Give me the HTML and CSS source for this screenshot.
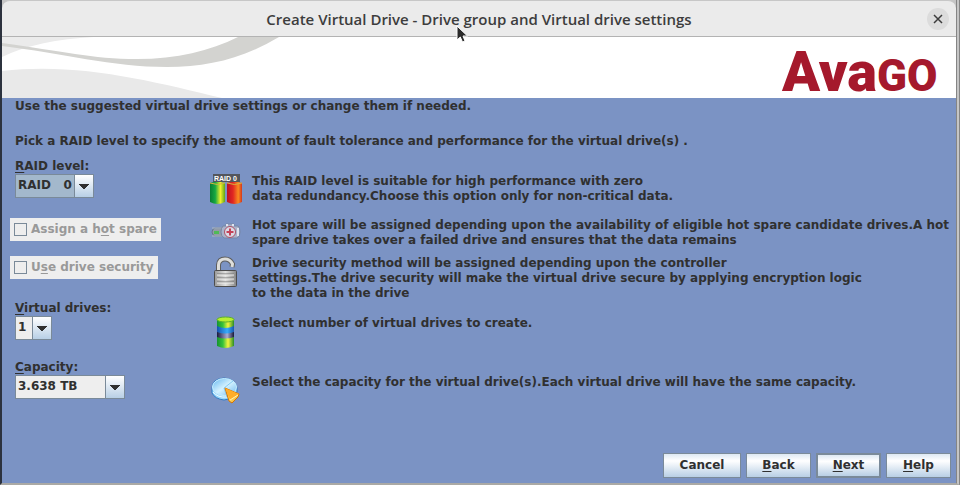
FILE: index.html
```
<!DOCTYPE html>
<html lang="en">
<head>
<meta charset="utf-8">
<title>Create Virtual Drive</title>
<link rel="stylesheet" href="styles.css">
</head>
<body>
<div class="window">
  <header class="titlebar">
    <h1>Create Virtual Drive - Drive group and Virtual drive settings</h1>
    <button class="close" type="button" aria-label="Close"><svg width="10" height="10" viewBox="0 0 10 10"><path d="M1 1L9 9M9 1L1 9" stroke="#3c3c3c" stroke-width="1.5"/></svg></button>
  </header>
  <svg class="pointer" width="14" height="20" viewBox="0 0 14 20"><path d="M1 1V15L4.300 12L6.500 17L9 16L7 11H11.500Z" fill="#2b2b2b" stroke="#fff" stroke-width="1"/></svg>
  <div class="banner">
    <svg class="waves" width="300" height="61" viewBox="0 0 300 61">
      <path d="M0 0H92C55 2 25 8 0 20Z" fill="#ebebeb"/>
      <path d="M0 34C75 25 150 44 220 61H0Z" fill="#e9e9e9"/>
      <path d="M0 6C60 14 90 22 135 22C175 22 208 14 236 0H277C240 22 205 30 165 30C110 30 60 16 0 9Z" fill="#d3d3d0"/>
    </svg>
    <svg class="logo" width="158" height="61" viewBox="0 0 158 61" role="img" aria-label="Avago">
      <text x="0" y="54"><tspan class="big">A</tspan><tspan class="low">va</tspan><tspan class="cap">GO</tspan></text>
    </svg>
  </div>
  <main class="content">
    <p class="intro">Use the suggested virtual drive settings or change them if needed.</p>
    <p class="intro">Pick a RAID level to specify the amount of fault tolerance and performance for the virtual drive(s) .</p>
    <form class="settings">
      <div class="row tall">
        <div class="field"><label for="raid"><u>R</u>AID level:</label>
          <select id="raid" class="combo active"><option>RAID &nbsp; 0</option></select></div>
        <svg class="icon" width="34" height="32" viewBox="0 0 34 32">
          <defs>
            <linearGradient id="green"><stop offset="0" stop-color="#087d32"/><stop offset=".35" stop-color="#16a842"/><stop offset=".7" stop-color="#f0f02c"/><stop offset="1" stop-color="#61a516"/></linearGradient>
            <linearGradient id="red"><stop offset="0" stop-color="#bd1025"/><stop offset=".4" stop-color="#e12822"/><stop offset=".75" stop-color="#fa8a20"/><stop offset="1" stop-color="#d2381e"/></linearGradient>
          </defs>
          <path d="M0 9Q7.500 6 15 9V28Q7.500 32 0 28Z" fill="url(#green)"/>
          <path d="M17 9Q24.500 6 32 9V28Q24.500 32 17 28Z" fill="url(#red)"/>
          <path d="M0 9Q7.500 12 15 9M17 9Q24.500 12 32 9" fill="none" stroke="#d7b43d"/>
          <rect x="3" width="27" height="8" fill="#53565d"/>
          <text class="tag" x="4" y="7">RAID 0</text>
        </svg>
        <p>This RAID level is suitable for high performance with zero<br>data redundancy.Choose this option only for non-critical data.</p>
      </div>
      <div class="row spare">
        <div class="check"><input type="checkbox" id="spare" disabled><label for="spare">Assign a h<u>o</u>t spare</label></div>
        <svg class="icon" width="34" height="26" viewBox="0 0 34 26">
          <path d="M5 10H13V18H5Q2 17 2 14T5 10Z" fill="#929ca8" stroke="#667587"/>
          <path d="M4 13H9V16H4Z" fill="#4fba56"/><path d="M2 10H12M2 18H12" stroke="#aeb9c6"/>
          <path d="M13 8H16V6H24V8H28Q30 9 30 14T27 20H14Q11 18 11 14T13 8Z" fill="#a9b3cb" stroke="#7686a5"/>
          <path d="M17 8V6M23 8V6M28 10V18" stroke="#e0e4ef" stroke-width="2"/>
          <circle cx="20" cy="14" r="5.500" fill="#dadbe6" stroke="#ae5267"/>
          <path d="M20 10.500V17.500M16.500 14H23.500" stroke="#c54359" stroke-width="2"/>
        </svg>
        <p>Hot spare will be assigned depending upon the availability of eligible hot spare candidate drives.A hot<br>spare drive takes over a failed drive and ensures that the data remains</p>
      </div>
      <div class="row security">
        <div class="check"><input type="checkbox" id="secure" disabled><label for="secure">U<u>s</u>e drive security</label></div>
        <svg class="icon" width="34" height="32" viewBox="0 0 34 32">
          <defs><linearGradient id="steel"><stop offset="0" stop-color="#999"/><stop offset=".5" stop-color="#e1e1df"/><stop offset="1" stop-color="#858585"/></linearGradient></defs>
          <path d="M8.500 15V9Q9 3 15 3Q20 3 22.500 8L22 11" fill="none" stroke="#5e5e5e" stroke-width="5"/>
          <path d="M8.500 15V9Q9 3 15 3Q20 3 22.500 8L22 11" fill="none" stroke="#dededb" stroke-width="3"/>
          <rect x="4.500" y="14.500" width="22" height="16" rx="1" fill="url(#steel)" stroke="#4d4d4d"/>
          <path d="M7 18H24M7 22H24M7 26H24" stroke="#777"/>
          <path d="M7 19H24M7 23H24M7 27H24" stroke="#f0f0ee"/>
        </svg>
        <p>Drive security method will be assigned depending upon the controller<br>settings.The drive security will make the virtual drive secure by applying encryption logic<br>to the data in the drive</p>
      </div>
      <div class="row tall">
        <div class="field"><label for="drives"><u>V</u>irtual drives:</label>
          <select id="drives" class="combo count"><option>1</option></select></div>
        <svg class="icon" width="34" height="33" viewBox="0 0 34 33">
          <defs>
            <linearGradient id="lime"><stop offset="0" stop-color="#16942f"/><stop offset=".35" stop-color="#37c33b"/><stop offset=".65" stop-color="#f4f63f"/><stop offset="1" stop-color="#278d28"/></linearGradient>
            <linearGradient id="blue"><stop offset="0" stop-color="#1452ae"/><stop offset=".6" stop-color="#39adfa"/><stop offset="1" stop-color="#1757ae"/></linearGradient>
            <linearGradient id="navy"><stop offset="0" stop-color="#19193d"/><stop offset=".6" stop-color="#a8acd2"/><stop offset="1" stop-color="#171738"/></linearGradient>
          </defs>
          <path d="M7 3V30Q15 34 24 30V3Z" fill="url(#lime)"/>
          <path d="M7 10Q15 14 24 10V18H7Z" fill="url(#blue)"/>
          <path d="M7 16Q15 19 24 16V21Q15 24 7 21Z" fill="url(#navy)"/>
          <ellipse cx="15.500" cy="3.500" rx="8.500" ry="2.500" fill="#b8ef31" stroke="#5cae2e"/>
        </svg>
        <p>Select number of virtual drives to create.</p>
      </div>
      <div class="row tall">
        <div class="field"><label for="capacity"><u>C</u>apacity:</label>
          <select id="capacity" class="combo size"><option>3.638 TB</option></select></div>
        <svg class="icon" width="34" height="32" viewBox="0 0 34 32">
          <defs>
            <linearGradient id="disc" x2="1" y2="1"><stop offset="0" stop-color="#65b7ef"/><stop offset=".5" stop-color="#d4f2ff"/><stop offset="1" stop-color="#6fb8ee"/></linearGradient>
            <linearGradient id="wedge" x2="1" y2="1"><stop offset="0" stop-color="#ff970d"/><stop offset=".5" stop-color="#ffe46a"/><stop offset="1" stop-color="#ed9516"/></linearGradient>
          </defs>
          <path d="M2 13Q2 4 14 3Q26 4 27 13V17Q23 24 14 25Q5 24 2 18Z" fill="#99d8fb" stroke="#327ac3"/>
          <ellipse cx="14.500" cy="12" rx="12" ry="8.500" fill="url(#disc)" stroke="#c6edff"/>
          <path d="M3 17Q8 23 17 22" fill="none" stroke="#eefaff"/><path d="M14 13L23 6M14 13L17 22" stroke="#83c9f1"/>
          <path d="M15 13L29 19L28 22L22 28L19 26Z" fill="url(#wedge)" stroke="#d77400"/>
          <path d="M15 13L29 19L20 25Z" fill="#ffad29"/><path d="M20 25L28 20" stroke="#fff3b0"/>
        </svg>
        <p>Select the capacity for the virtual drive(s).Each virtual drive will have the same capacity.</p>
      </div>
    </form>
    <footer class="actions">
      <button type="button" class="wide">Cancel</button>
      <button type="button"><u>B</u>ack</button>
      <button type="button" class="primary"><u>N</u>ext</button>
      <button type="button"><u>H</u>elp</button>
    </footer>
  </main>
</div>
</body>
</html>
```

FILE: styles.css
```
* { box-sizing: border-box; }
body {
  margin: 0;
  background: #c5c5c5;
  color: #303030;
  font: bold 12px/15px "DejaVu Sans", sans-serif;
}
h1, p { margin: 0; }
.window {
  display: flex;
  flex-direction: column;
  min-height: 100vh;
  position: relative;
  border: solid #2c323e;
  border-width: 0 0 0 2px;
  border-right: 4px double #858585;
  border-bottom: 2px solid #aaa9a5;
}
.titlebar {
  display: flex;
  align-items: center;
  height: 37px;
  padding: 0 7px 0 29px;
  background: #ebebeb;
  border-top: 1px solid #c7c7c7;
  border-bottom: 1px solid #b3b3b3;
  border-radius: 8px 8px 0 0;
}
h1 {
  flex: 1;
  text-align: center;
  font: 600 15px/20px "Open Sans", "Noto Sans", sans-serif;
  color: #3d3d3d;
}
.close {
  display: grid;
  place-items: center;
  width: 22px;
  height: 22px;
  padding: 0;
  border: 0;
  border-radius: 50%;
  background: #dcdcdc;
}
.pointer { position: absolute; left: 454px; top: 25px; }
.banner {
  display: flex;
  justify-content: space-between;
  height: 61px;
  padding-right: 16px;
  background: #fff;
}
.logo {
  overflow: visible;
  fill: #a5192c;
  font-family: Roboto, sans-serif;
  font-weight: 900;
}
.big { font-size: 56px; }
.low { font-size: 56px; }
.cap { font-size: 44px; }
.content {
  flex: 1;
  display: flex;
  flex-direction: column;
  padding-top: 1px;
  background: #7b93c4;
}
.intro { padding-left: 13px; margin-bottom: 20px; }
.intro + .intro { margin-bottom: 10px; }
.row {
  display: grid;
  grid-template-columns: 192px 34px 1fr;
  column-gap: 8px;
  align-items: start;
  padding-left: 8px;
}
.tall { min-height: 59px; }
.tall > .icon, .tall > p { margin-top: 15px; }
.spare { min-height: 38px; }
.security { min-height: 45px; }
.field { padding-left: 5px; }
.field label { display: block; }
u { text-underline-offset: 2px; text-decoration-skip-ink: none; }
.combo {
  display: block;
  appearance: none;
  width: 79px;
  height: 24px;
  padding: 0 19px 2px 2px;
  border: 1px solid #7a8a99;
  border-radius: 0;
  color: #303030;
  font: inherit;
  background-color: #eee;
  background-image:
    linear-gradient(to bottom left, #303030 50%, transparent 51%),
    linear-gradient(to bottom right, #303030 50%, transparent 51%),
    linear-gradient(#7a8a99, #7a8a99),
    linear-gradient(#fff, #b8cfe5);
  background-size: 5px 5px, 5px 5px, 1px 100%, 18px 100%;
  background-position: right 9px top 9px, right 4px top 9px, right 18px top, right top;
  background-repeat: no-repeat;
}
.active { background-color: #a3b8cc; }
.count { width: 37px; }
.size { width: 110px; }
.check {
  display: flex;
  align-items: center;
  justify-self: start;
  gap: 4px;
  height: 23px;
  padding: 0 4px;
  background: #eee;
  color: #999;
}
.check input {
  appearance: none;
  width: 13px;
  height: 13px;
  margin: 0;
  border: 1px solid #7a8a99;
}
.tag { font: bold 7px "Liberation Sans", sans-serif; fill: #fff; }
.actions {
  display: flex;
  justify-content: flex-end;
  gap: 5px;
  margin-top: auto;
  padding: 0 5px 5px;
}
.actions button {
  width: 65px;
  height: 25px;
  padding: 0;
  border: 1px solid #7a8a99;
  background: linear-gradient(#dde8f3, #fff 30%, #b8cfe5);
  color: #303030;
  font: inherit;
}
.actions .wide { width: 78px; }
.actions .primary { border-width: 2px; }
```
